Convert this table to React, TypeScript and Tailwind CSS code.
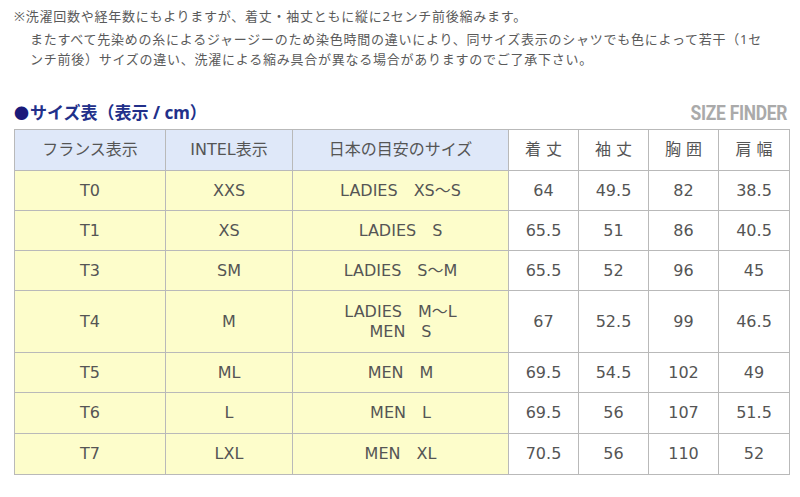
import React from "react";

const rows: { f: string; i: string; j: React.ReactNode; a: string; b: string; c: string; d: string; h: string }[] = [
  { f: "T0", i: "XXS", j: "LADIES　XS〜S", a: "64", b: "49.5", c: "82", d: "38.5", h: "h-[40px]" },
  { f: "T1", i: "XS", j: "LADIES　S", a: "65.5", b: "51", c: "86", d: "40.5", h: "h-[40px]" },
  { f: "T3", i: "SM", j: "LADIES　S〜M", a: "65.5", b: "52", c: "96", d: "45", h: "h-[40px]" },
  {
    f: "T4",
    i: "M",
    j: (
      <span className="block leading-[20px]">
        LADIES　M〜L
        <br />
        MEN　S
      </span>
    ),
    a: "67",
    b: "52.5",
    c: "99",
    d: "46.5",
    h: "h-[62px]",
  },
  { f: "T5", i: "ML", j: "MEN　M", a: "69.5", b: "54.5", c: "102", d: "49", h: "h-[40px]" },
  { f: "T6", i: "L", j: "MEN　L", a: "69.5", b: "56", c: "107", d: "51.5", h: "h-[41px]" },
  { f: "T7", i: "LXL", j: "MEN　XL", a: "70.5", b: "56", c: "110", d: "52", h: "h-[41px]" },
];

const font = "font-['Noto_Sans','Noto_Sans_CJK_JP',sans-serif]";
const cell = "border border-[#b9b9b9]";

export default function App() {
  return (
    <div className={`w-[800px] h-[497px] bg-white overflow-hidden text-[#555] ${font}`}>
      <div className="pl-[14px] pt-[6px] text-[13px] tracking-[0.75px] leading-[20px] text-[#5a5a5a]">
        <p className="mb-[3px]">※洗濯回数や経年数にもよりますが、着丈・袖丈ともに縦に2センチ前後縮みます。</p>
        <p className="pl-[16px]">
          またすべて先染めの糸によるジャージーのため染色時間の違いにより、同サイズ表示のシャツでも色によって若干（1セ
          <br />
          ンチ前後）サイズの違い、洗濯による縮み具合が異なる場合がありますのでご了承下さい。
        </p>
      </div>
      <div className="flex items-end justify-between pl-[14px] pr-[13px] mt-[32px] h-[24px]">
        <div className="text-[17px] font-bold text-[#22308a] leading-[24px] flex items-center">
          <span className="text-[#1a1a7a] text-[15px] mr-[1px]">●</span>
          <span>サイズ表（表示 / cm）</span>
        </div>
        <div className="font-['Roboto',sans-serif] font-bold text-[20px] text-[#aaaaaa] leading-[24px] tracking-[-0.3px] scale-x-[0.87] origin-right">
          SIZE FINDER
        </div>
      </div>
      <div className="pl-[14px] mt-[4px]">
        <table className="border-collapse table-fixed w-[775px] text-[16px] text-center text-[#555] font-['DejaVu_Sans','Noto_Sans_CJK_JP',sans-serif]">
          <colgroup>
            <col className="w-[151px]" />
            <col className="w-[127px]" />
            <col className="w-[216px]" />
            <col className="w-[70px]" />
            <col className="w-[70px]" />
            <col className="w-[70px]" />
            <col className="w-[71px]" />
          </colgroup>
          <thead>
            <tr className="h-[41px]">
              <th className={`${cell} bg-[#dfe8f9] font-normal`}>フランス表示</th>
              <th className={`${cell} bg-[#dfe8f9] font-normal`}>INTEL表示</th>
              <th className={`${cell} bg-[#dfe8f9] font-normal`}>日本の目安のサイズ</th>
              <th className={`${cell} bg-white font-normal`}>着 丈</th>
              <th className={`${cell} bg-white font-normal`}>袖 丈</th>
              <th className={`${cell} bg-white font-normal`}>胸 囲</th>
              <th className={`${cell} bg-white font-normal`}>肩 幅</th>
            </tr>
          </thead>
          <tbody>
            {rows.map((r) => (
              <tr key={r.f} className={r.h}>
                <td className={`${cell} bg-[#fdfdcb]`}>{r.f}</td>
                <td className={`${cell} bg-[#fdfdcb]`}>{r.i}</td>
                <td className={`${cell} bg-[#fdfdcb]`}>{r.j}</td>
                <td className={`${cell} bg-white`}>{r.a}</td>
                <td className={`${cell} bg-white`}>{r.b}</td>
                <td className={`${cell} bg-white`}>{r.c}</td>
                <td className={`${cell} bg-white`}>{r.d}</td>
              </tr>
            ))}
          </tbody>
        </table>
      </div>
    </div>
  );
}
